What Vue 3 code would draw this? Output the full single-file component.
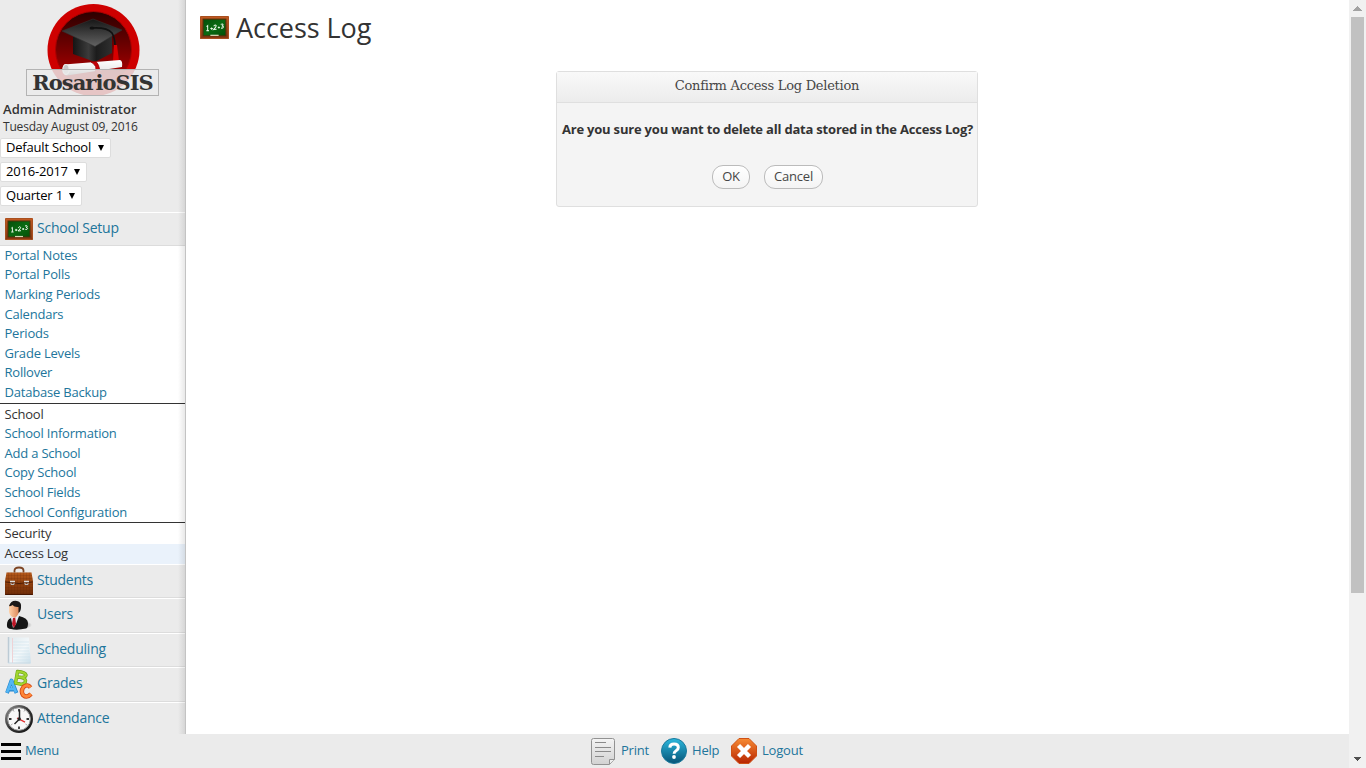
<script setup>
const groups = [
  { links: ['Portal Notes', 'Portal Polls', 'Marking Periods', 'Calendars', 'Periods', 'Grade Levels', 'Rollover', 'Database Backup'] },
  { title: 'School', links: ['School Information', 'Add a School', 'Copy School', 'School Fields', 'School Configuration'] },
  { title: 'Security', links: ['Access Log'] },
]
const modules = ['Students', 'Users', 'Scheduling', 'Grades', 'Attendance']
const selects = ['Default School', '2016-2017', 'Quarter 1']
</script>

<template>
  <div class="page">
    <svg class="defs" width="0" height="0">
      <defs>
        <linearGradient id="wood" x1="0" y1="0" x2="0" y2="1"><stop offset="0" stop-color="#c35a22" /><stop offset="1" stop-color="#853512" /></linearGradient>
        <linearGradient id="board" x1="0" y1="0" x2="1" y2="1"><stop offset="0" stop-color="#064f0c" /><stop offset=".5" stop-color="#0a6a12" /><stop offset="1" stop-color="#045008" /></linearGradient>
        <symbol id="chalk" viewBox="0 0 28 22">
          <rect width="28" height="22" rx="1" fill="url(#wood)" />
          <rect x=".5" y=".5" width="27" height="21" rx="1" fill="none" stroke="#a9501f" />
          <rect x="3" y="3" width="22" height="16" fill="url(#board)" stroke="#4d3008" />
          <g fill="none" stroke="#e9f5e6" stroke-width="1">
            <path d="M6.300 10.200l1.100-.900v4.600M6.200 14h2.400M10 12h2.400M11.200 10.900v2.200M13.200 9.800q1.500-2 2.500-.4 0 1-2.600 3.600l2.900-.3M17.200 11h2M18.200 10v2M20 8q2.300-1 2.200.4 0 .9-1.200 1.100 1.700 0 1.500 1.200-.3 1.300-2.200.7" />
          </g>
          <path d="M10 18.500h8" stroke="#d6d6b4" stroke-width="1.200" />
        </symbol>
      </defs>
    </svg>

    <div class="body">
      <aside class="side">
        <div class="logo">
          <svg width="94" height="94" viewBox="0 0 94 94">
            <defs>
              <linearGradient id="disc" x1="0" y1="0" x2="0" y2="1"><stop offset="0" stop-color="#2b0000" /><stop offset=".55" stop-color="#7c0000" /><stop offset="1" stop-color="#c40000" /></linearGradient>
              <linearGradient id="cap" x1="0" y1="0" x2="0" y2="1"><stop offset="0" stop-color="#161616" /><stop offset="1" stop-color="#626262" /></linearGradient>
              <linearGradient id="capside" x1="0" y1="0" x2="1" y2="0"><stop offset="0" stop-color="#151515" /><stop offset=".4" stop-color="#3b3b3b" /><stop offset=".6" stop-color="#1c1c1c" /><stop offset="1" stop-color="#2f2f2f" /></linearGradient>
              <linearGradient id="scroll" x1="0" y1="0" x2="0" y2="1"><stop offset="0" stop-color="#fff" /><stop offset=".55" stop-color="#eee" /><stop offset="1" stop-color="#888" /></linearGradient>
            </defs>
            <circle cx="47.500" cy="47" r="46" fill="#ce0000" />
            <circle cx="47.500" cy="46.500" r="38" fill="url(#disc)" stroke="#a90000" />
            <path d="M27 34V51L49 59 66 50V32z" fill="url(#capside)" />
            <path d="M16 28L47 16 76 27 49 43.500z" fill="url(#cap)" stroke="#333" stroke-width=".6" />
            <path d="M46 25q15-1 20 5 3 5 3 13" fill="none" stroke="#111" stroke-width="1.600" />
            <ellipse cx="46" cy="25" rx="2.500" ry="1.500" fill="#111" />
            <path d="M68 42h3l2 16h-6z" fill="#d70000" />
            <path d="M18 61.500L74 57q3 1 2 7L21 72.500q-4 0-4-6 0-4 1-5z" fill="url(#scroll)" />
            <ellipse cx="20" cy="66.500" rx="3.200" ry="5" fill="#c9c9c9" stroke="#eee" stroke-width="1.200" />
            <path d="M45 59q7 4 4 10l8 4-3-5q-1-7-4-9.500z" fill="#c60008" stroke="#930000" stroke-width=".7" />
          </svg>
          <div class="wordmark"><span>RosarioSIS</span></div>
        </div>
        <div class="who">Admin Administrator</div>
        <div class="date">Tuesday August 09, 2016</div>
        <div class="selects">
          <div v-for="(s, i) in selects" :key="s" class="select" :class="'s' + i">
            <span>{{ s }}</span>
            <svg width="6" height="6" viewBox="0 0 6 6"><path d="M0 0h6L3 6z" fill="#000" /></svg>
          </div>
        </div>

        <div class="module first"><svg class="ico" width="28" height="22"><use href="#chalk" /></svg><span>School Setup</span></div>
        <nav class="menu">
          <div v-for="(g, i) in groups" :key="i" class="group">
            <div v-if="g.title" class="item heading">{{ g.title }}</div>
            <div v-for="l in g.links" :key="l" class="item" :class="{ current: l === 'Access Log' }">{{ l }}</div>
          </div>
        </nav>
        <div v-for="m in modules" :key="m" class="module">
          <svg v-if="m === 'Students'" class="ico" width="28" height="30" viewBox="0 0 28 30">
            <defs>
              <linearGradient id="leather" x1="0" y1="0" x2="0" y2="1"><stop offset="0" stop-color="#b5591b" /><stop offset=".55" stop-color="#8d3e0d" /><stop offset="1" stop-color="#6d2c08" /></linearGradient>
              <pattern id="weave" width="3" height="3" patternUnits="userSpaceOnUse"><path d="M0 0h3M0 0v3" stroke="#571f04" stroke-opacity=".4" stroke-width=".8" /></pattern>
            </defs>
            <path d="M9.500 6.500V4.500q0-3 4.500-3t4.500 3v2" fill="none" stroke="#7d4524" stroke-width="1.800" />
            <path d="M1.500 6.500h25l1.500 9v13.500H0V15.500z" fill="url(#leather)" />
            <path d="M1.500 6.500h25l1.500 9v13.500H0V15.500z" fill="url(#weave)" />
            <path d="M.5 16q13.500 3 27 0" fill="none" stroke="#4b1d06" />
            <path d="M.5 28.500h27" stroke="#461702" />
            <path d="M5 15.500h5M19 15.500h5" stroke="#ddd" stroke-width="1.400" />
            <path d="M6 17v1.500h3V17M20 17v1.500h3V17" fill="none" stroke="#bbb" />
          </svg>
          <svg v-else-if="m === 'Users'" class="ico" width="28" height="30" viewBox="0 0 28 30">
            <defs>
              <linearGradient id="face" x1="0" y1="0" x2="1" y2="0"><stop offset="0" stop-color="#ffd2aa" /><stop offset="1" stop-color="#d88153" /></linearGradient>
              <radialGradient id="shade"><stop offset="0" stop-color="#555" stop-opacity=".7" /><stop offset="1" stop-color="#555" stop-opacity="0" /></radialGradient>
            </defs>
            <ellipse cx="18" cy="25" rx="9" ry="4" fill="url(#shade)" />
            <path d="M2 26q-.5-6 4-8l8-2q9 2 9 7 0 5-2 5.500-9 2-15 .500-4-.500-4-3z" fill="#151515" />
            <path d="M6 18l3-3 5 1-3 8-3 4z" fill="#e9edf5" />
            <path d="M8 18l2.200-.300L11 24l-2 4-2-4z" fill="#bd1626" />
            <path d="M4 6q1-4 6-3.500Q15 3 14.500 9q-.5 6-4.500 9-5-1-6-6z" fill="url(#face)" />
            <path d="M4 6Q6 0 12 1q5 1 4 7-.500 4-2.500 5V7q-4 .5-6-2Q6 6.500 4 6z" fill="#1b1919" />
          </svg>
          <svg v-else-if="m === 'Scheduling'" class="ico" width="28" height="30" viewBox="0 0 28 30">
            <defs><linearGradient id="paper" x1="0" y1="0" x2="1" y2="1"><stop offset="0" stop-color="#dfe9ee" /><stop offset=".55" stop-color="#f3f8fa" /><stop offset="1" stop-color="#cbdfea" /></linearGradient></defs>
            <path d="M3 2.500h21l2 26H3z" fill="url(#paper)" />
            <path d="M3.500 2v26" stroke="#bccbd5" stroke-width="1.500" />
            <path d="M8 7h16M8 10h16M8 13h16M8 16h16M8 19h17M8 22h17M8 25h17" stroke="#cfe2ed" stroke-width=".6" />
            <path d="M7.500 3v25" stroke="#efd2d5" /><path d="M3 28h22" stroke="#cadbe5" />
          </svg>
          <svg v-else-if="m === 'Grades'" class="ico" width="28" height="30" viewBox="0 0 28 30">
            <g fill="none" stroke-linejoin="round">
              <path d="M2 24L6.500 11.500l5 12.500M3.500 20.500h6.500" stroke="#2386cf" stroke-width="3.800" />
              <path d="M2 23.500L6.500 11.500l4.500 12M4 20h6" stroke="#53b6f4" stroke-width="2.600" />
              <path d="M12.500 2.500L10.500 14l5 1.200q5 0 5-3.700-.5-3-8-3.500 8 1.500 8.500-2Q20 3 12.500 2.500z" stroke="#6ba413" stroke-width="3.400" />
              <path d="M12.500 2.500L10.500 14l5 1.200q5 0 5-3.700-.5-3-8-3.500 8 1.500 8.500-2Q20 3 12.500 2.500z" stroke="#a2d62f" stroke-width="2.200" />
              <path d="M25.500 18.500q-3-4-7-.5-3 4-.5 8 4 3.500 8-1" stroke="#cf4612" stroke-width="4.400" />
              <path d="M25.500 18.500q-3-4-7-.5-3 4-.5 8 4 3.500 8-1" stroke="#ff8536" stroke-width="2.800" />
            </g>
          </svg>
          <svg v-else class="ico" width="28" height="30" viewBox="0 0 28 30">
            <defs><linearGradient id="rim" x1="0" y1="0" x2="1" y2="1"><stop offset="0" stop-color="#999" /><stop offset=".5" stop-color="#333" /><stop offset="1" stop-color="#111" /></linearGradient></defs>
            <circle cx="14" cy="15" r="14" fill="url(#rim)" />
            <circle cx="14" cy="15" r="11.300" fill="#f8f8f8" stroke="#999" />
            <path d="M14 5v2.500M14 22.500V25M4 15h2.500M21.500 15H24" stroke="#333" stroke-width="1.800" />
            <path d="M8 6l1 1.500M20 6l-1 1.500M6 21l1.500-1M22 21l-1.500-1" stroke="#aaa" />
            <path d="M14.500 6v9L9.500 20" fill="none" stroke="#222" stroke-width="1.500" />
            <path d="M12 14l8 4.200" stroke="#e22d2d" stroke-width="1.400" />
            <circle cx="14.200" cy="15" r="1.700" fill="#222" />
          </svg>
          <span>{{ m }}</span>
        </div>
        <div class="shadow"></div>
      </aside>

      <main class="main">
        <h1><svg width="29" height="23" viewBox="0 0 28 22" preserveAspectRatio="none"><use href="#chalk" /></svg><span>Access Log</span></h1>
        <section class="dialog">
          <header><span>Confirm Access Log Deletion</span></header>
          <p><span>Are you sure you want to delete all data stored in the Access Log?</span></p>
          <div class="buttons"><button class="ok">OK</button><button class="cancel">Cancel</button></div>
        </section>
      </main>
    </div>

    <footer class="foot">
      <div class="burger"><i></i><i></i><i></i></div><span class="mtext">Menu</span>
      <div class="actions">
        <svg width="24" height="27" viewBox="0 0 24 27">
          <defs><linearGradient id="sheet" x1="0" y1="0" x2="0" y2="1"><stop offset="0" stop-color="#f4f4f4" /><stop offset="1" stop-color="#d2d2d2" /></linearGradient></defs>
          <path d="M2.500.5h19q2 0 2 2v19l-5 5h-16q-2 0-2-2v-22q0-2 2-2z" fill="url(#sheet)" stroke="#929292" />
          <path d="M18.500 26v-4.500h5" fill="#eee" stroke="#929292" />
          <path d="M4 4.500h11M4 9.500h16M4 13.500h16M4 18.500h9" stroke="#8a8a8a" stroke-width="1.200" />
        </svg><span class="print">Print</span>
        <svg width="26" height="26" viewBox="0 0 26 26">
          <defs><linearGradient id="blue" x1="0" y1="0" x2="0" y2="1"><stop offset="0" stop-color="#2bb8de" /><stop offset="1" stop-color="#075477" /></linearGradient></defs>
          <circle cx="13" cy="13" r="12.500" fill="url(#blue)" stroke="#19799c" />
          <path d="M8.800 9.600Q9 6 13 6q4.300 0 4.300 3.500 0 2-2.200 3.300-2 1.200-2 3" fill="none" stroke="#fff" stroke-width="3" />
          <circle cx="13" cy="19" r="1.900" fill="#fff" />
        </svg><span class="help">Help</span>
        <svg width="26" height="26" viewBox="0 0 26 26">
          <defs><linearGradient id="orange" x1="0" y1="0" x2="0" y2="1"><stop offset="0" stop-color="#f78b34" /><stop offset="1" stop-color="#b82400" /></linearGradient></defs>
          <path d="M8 .5h10L25.500 8v10L18 25.500H8L.5 18V8z" fill="url(#orange)" stroke="#cf5015" />
          <path d="M7.500 7.500l11 11M18.500 7.500l-11 11" stroke="#fff" stroke-width="4.400" />
        </svg><span class="logout">Logout</span>
      </div>
    </footer>
    <div class="scrollbar">
      <svg width="9" height="5" viewBox="0 0 9 5"><path d="M4 0h1v1h1v1h1v1h1v1h1v1H0V4h1V3h1V2h1V1h1z" fill="#a3a3a3" /></svg>
      <div class="thumb"></div>
      <svg class="down" width="7" height="4" viewBox="0 0 7 4"><path d="M0 0h7v1H6v1H5v1H4v1H3V3H2V2H1V1H0z" fill="#505050" /></svg>
    </div>
  </div>
</template>

<style>
html, body { margin: 0; overflow: hidden; background: #fff; }
</style>
<style scoped>
* { box-sizing: border-box; }
.page { width: 1366px; height: 768px; display: grid; grid-template-columns: 1349px 17px; grid-template-rows: 734px 34px; position: relative; overflow: hidden; font: 13px/19.600px "Open Sans", sans-serif; color: #333; white-space: nowrap; }
.defs { position: absolute; }
.body { display: flex; overflow: hidden; }
.side { width: 186px; height: 734px; overflow: hidden; position: relative; background: #ebebeb; flex: none; }
.shadow { position: absolute; top: 0; right: 0; bottom: 0; width: 8px; border-right: 1px solid #c3c3c3; background: linear-gradient(90deg, rgba(0,0,0,0), rgba(0,0,0,.09)); }
.logo { height: 99px; padding: 3px 0 0 46px; position: relative; }
.logo > svg { display: block; }
.wordmark { position: absolute; left: 26px; top: 69px; width: 133px; height: 27px; border: 1px solid #b3b3b3; background: rgba(235,235,235,.84); display: flex; justify-content: center; font: bold 21px/26px "DejaVu Serif", serif; color: #333; }
.wordmark span { letter-spacing: -.95px; margin-right: 0; }
.who { height: 19px; line-height: 20px; padding-left: 3px; font-weight: 600; letter-spacing: .08px; color: #333; }
.date { height: 20px; line-height: 17px; padding-left: 3px; font-size: 12px; letter-spacing: -.18px; }
.selects { display: flex; flex-direction: column; gap: 4px; height: 74px; align-items: flex-start; }
.select { display: flex; justify-content: space-between; align-items: center; width: 111px; height: 20px; padding: 0 6px 0 5px; border: 1px solid #ddd; border-radius: 2px; background: #fff; color: #000; letter-spacing: -.2px; }
.s1 { width: 87px; }
.s2 { width: 82px; }
.module { height: 34.500px; display: flex; align-items: center; border-top: 1px solid #fff; border-bottom: 1px solid #dcdcdc; padding-left: 5px; color: #21759b; font-size: 14px; line-height: 20px; letter-spacing: -.24px; }
.module .ico { flex: none; margin-right: 4px; }
.module span { position: relative; top: -1px; }
.module.first { height: 33.800px; }
.menu { background: #fff; height: 317.900px; }
.group + .group { border-top: 1px solid #333; padding-top: 1px; }
.item { height: 19.600px; line-height: 19.600px; padding-left: 4.500px; color: #21759b; letter-spacing: -.2px; }
.heading { color: #333; }
.current { color: #333; background: #eaf2fb; height: 20.500px; }
.main { flex: 1; display: flex; flex-direction: column; align-items: center; }
h1 { align-self: stretch; display: flex; align-items: center; gap: 7px; height: 55px; margin: 0 0 16px; padding-left: 14px; font-size: 27px; font-weight: 400; line-height: 55px; letter-spacing: -.05px; }
.dialog { width: 422px; height: 136px; border: 1px solid #dfdfdf; border-radius: 3px; background: #f4f4f4; text-align: center; margin-right: 1px; }
.dialog header { height: 31px; border-bottom: 1px solid #dfdfdf; background: linear-gradient(#f9f9f9, #ececec); font: 13px/27px "DejaVu Serif", serif; letter-spacing: -.26px; color: #464646; }
.dialog p { margin: 0; padding: 16px 0 0 1px; height: 62px; font-weight: 700; line-height: 20px; letter-spacing: -.2px; color: #333; }
.buttons { display: flex; justify-content: center; gap: 14px; }
button { height: 24px; padding: 0 0 2px 1px; border: 1px solid #bbb; border-radius: 11px; background: linear-gradient(#fff, #f4f4f4); color: #464646; font: 13px/20px "Open Sans", sans-serif; letter-spacing: -.2px; }
.ok { width: 38px; }
.cancel { width: 59px; }
.foot { grid-row: 2; background: #ebebeb; display: flex; align-items: center; position: relative; color: #21759b; letter-spacing: -.2px; }
.burger { width: 20px; margin-left: 1px; display: grid; gap: 4px; margin-right: 4px; }
.burger i { height: 3px; background: #000; }
.mtext { width: 35px; }
.actions { display: flex; align-items: center; margin-left: 531px; }
.actions span { margin-left: 5px; }
.actions .print { width: 40px; margin-left: 6px; }
.help { width: 39px; }
.actions .logout { margin-left: 5px; }
.scrollbar { grid-column: 2; grid-row: 1 / 3; background: #f1f1f1; display: flex; flex-direction: column; align-items: center; padding: 6px 0 7px; }
.thumb { width: 13px; height: 576px; margin-top: 6px; background: #c1c1c1; flex: none; }
.down { margin-top: auto; }
</style>
